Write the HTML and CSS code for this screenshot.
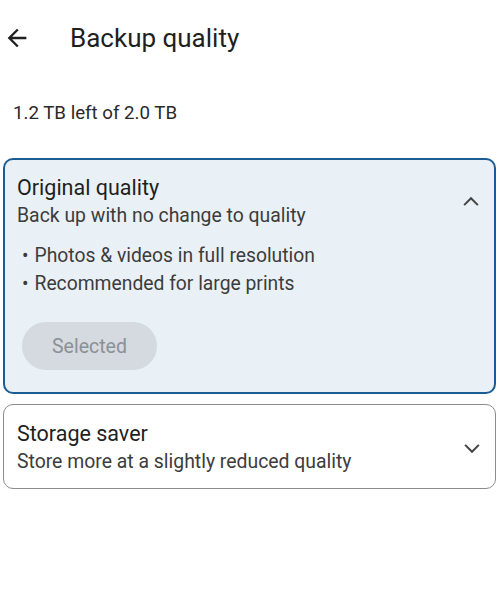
FILE: index.html
```html
<!DOCTYPE html>
<html lang="en">
<head>
<meta charset="utf-8">
<title>Backup quality</title>
<link rel="stylesheet" href="styles.css">
</head>
<body>
<header class="topbar">
  <svg class="back" viewBox="0 0 24 24" width="28" height="28" aria-hidden="true"><path d="M20 11H7.83l5.59-5.59L12 4l-8 8 8 8 1.41-1.41L7.83 13H20v-2z" fill="#1f1f1f"/></svg>
  <h1 class="title">Backup quality</h1>
</header>
<p class="storage">1.2 TB left of 2.0 TB</p>
<main class="options">
  <section class="card card-selected">
    <div class="card-head">
      <div class="card-text">
        <div class="card-title">Original quality</div>
        <div class="card-sub">Back up with no change to quality</div>
      </div>
      <svg class="chev" viewBox="0 0 24 24" width="30" height="30" aria-hidden="true"><path d="M6.5 14.5l5.5-5.5 5.5 5.5" fill="none" stroke="#444" stroke-width="1.6"/></svg>
    </div>
    <ul class="bullets">
      <li>Photos &amp; videos in full resolution</li>
      <li>Recommended for large prints</li>
    </ul>
    <button class="selected-btn" disabled>Selected</button>
  </section>
  <section class="card">
    <div class="card-head">
      <div class="card-text">
        <div class="card-title">Storage saver</div>
        <div class="card-sub">Store more at a slightly reduced quality</div>
      </div>
      <svg class="chev" viewBox="0 0 24 24" width="30" height="30" aria-hidden="true"><path d="M6.5 9.5l5.5 5.5 5.5-5.5" fill="none" stroke="#444" stroke-width="1.6"/></svg>
    </div>
  </section>
</main>
</body>
</html>
```
FILE: styles.css
```css
* { box-sizing: border-box; }
body {
  margin: 0;
  background: #ffffff;
  font-family: Roboto, "Noto Sans", sans-serif;
  color: #1f1f1f;
  width: 500px;
}
.topbar {
  display: flex;
  align-items: center;
  height: 76px;
  padding-left: 3px;
}
.back { width: 28px; height: 28px; }
.title {
  margin: 0 0 0 39px;
  font-size: 26px;
  font-weight: 400;
  color: #1f1f1f;
}
.storage {
  margin: 26px 0 0 13px;
  font-size: 18.7px;
  line-height: 22px;
  color: #2a2a2a;
}
.options {
  padding: 34px 4px 0 3px;
  display: flex;
  flex-direction: column;
  gap: 10px;
}
.card {
  border: 1px solid #8c8c8c;
  border-radius: 10px;
  padding: 14px 14px 12px 13px;
}
.card-selected {
  border: 2px solid #1b5c93;
  background: #eaf1f6;
  padding: 13px 14px 22px 12px;
}
.card-head {
  display: flex;
  justify-content: space-between;
  align-items: center;
}
.card-title {
  font-size: 21.5px;
  line-height: 29px;
  color: #1f1f1f;
}
.card-sub {
  font-size: 19.4px;
  line-height: 28px;
  color: #3c3c3c;
}
.chev { width: 30px; height: 30px; margin-right: -6px; }
.bullets {
  list-style: none;
  margin: 12px 0 0 0;
  padding: 0 0 0 5px;
  font-size: 19.3px;
  line-height: 28px;
  color: #3c3c3c;
}
.bullets li::before {
  content: "•";
  margin-right: 6px;
}
.selected-btn {
  margin: 24px 0 0 5px;
  width: 135px;
  height: 48px;
  border: none;
  border-radius: 24px;
  background: #d4dadf;
  color: #8b9096;
  font-family: Roboto, "Noto Sans", sans-serif;
  font-size: 19.5px;
}
```
